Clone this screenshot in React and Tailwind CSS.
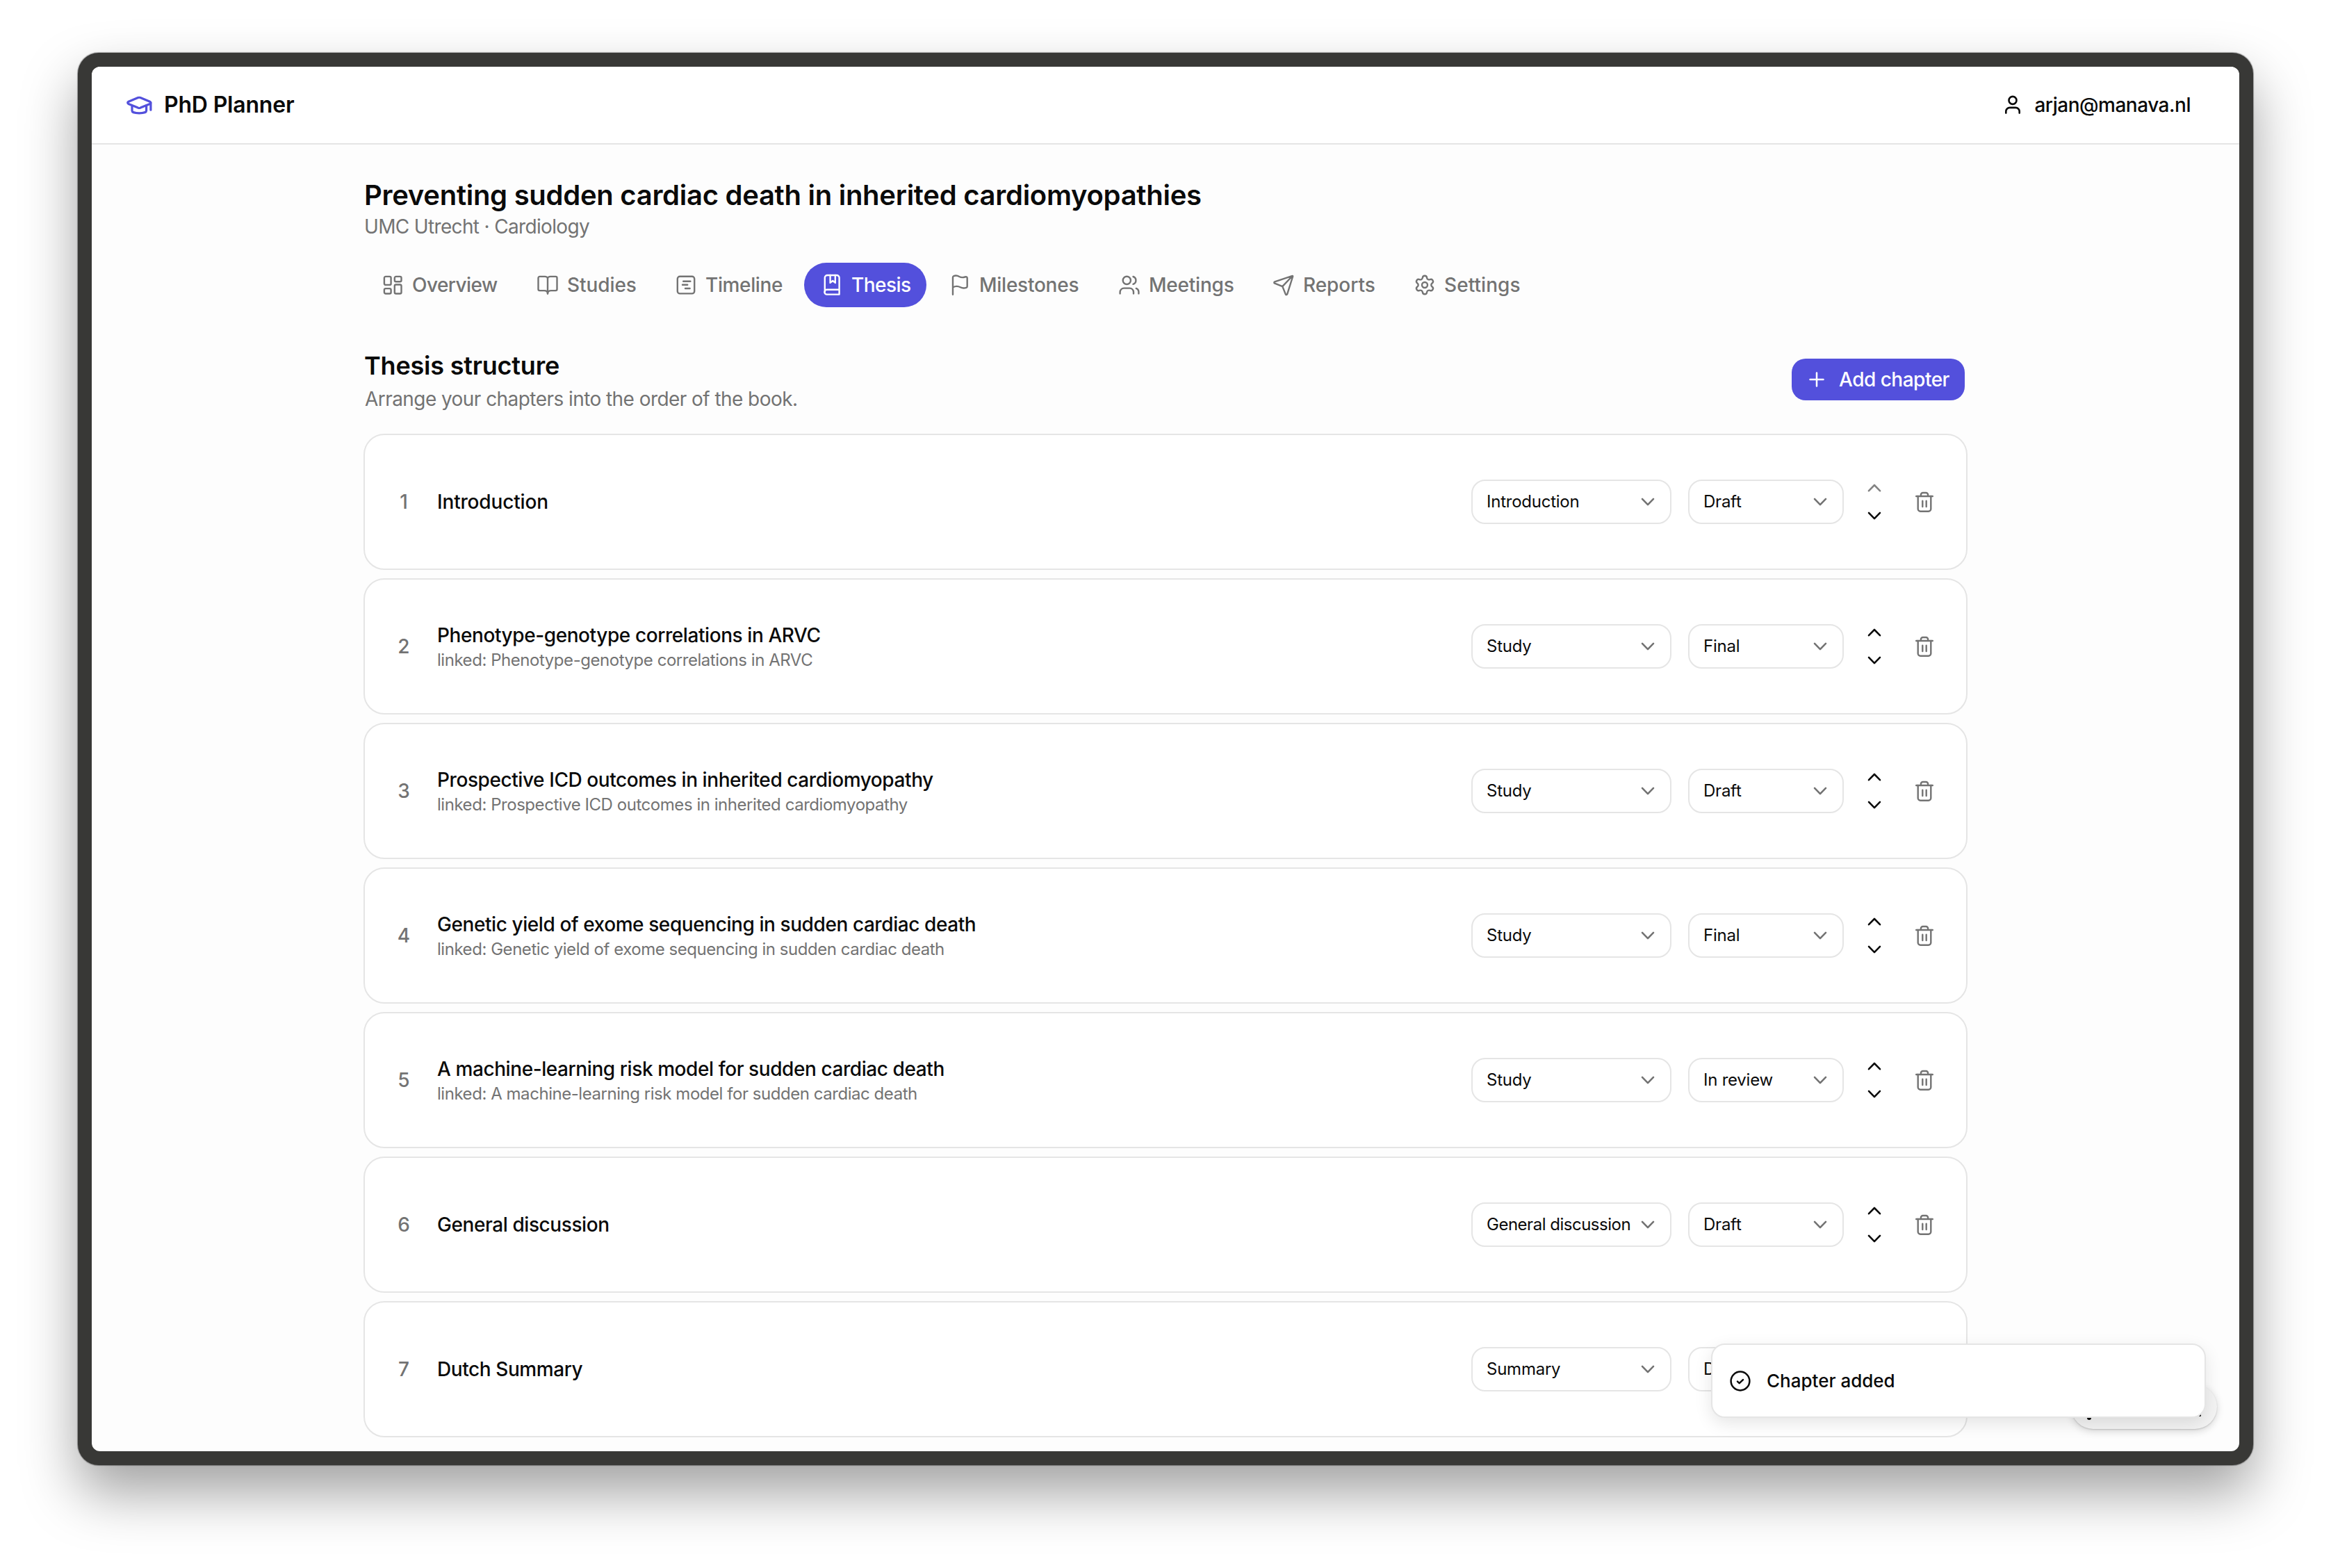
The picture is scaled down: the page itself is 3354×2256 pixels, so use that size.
import React from 'react';
import { Settings } from 'lucide-react';

function Icon({ className = 'size-8', stroke = 2.4, children, size = 32 }) {
  return (
    <svg
      className={`${className} shrink-0`}
      viewBox={`0 0 ${size} ${size}`}
      fill="none"
      stroke="currentColor"
      strokeWidth={stroke}
      strokeLinecap="round"
      strokeLinejoin="round"
    >
      {children}
    </svg>
  );
}

const GraduationCap = () => (
  <Icon className="size-10 text-[#5350dc]" size={40} stroke={3.2}>
    <path d="M18.6 9.6 4.9 15.2c-1.6.7-1.6 2.6 0 3.3l13.7 5.6c1.1.5 2.3.5 3.4 0l13.7-5.6c1.6-.7 1.6-2.6 0-3.3L22 9.6a4.4 4.4 0 0 0-3.4 0Z" />
    <path d="M10 20.8v7.4c0 2 4 3.6 10.3 3.6s10.3-1.6 10.3-3.6v-7.4M36.9 17v10.2" />
  </Icon>
);
const User = () => (
  <Icon stroke={2.6}>
    <circle cx="16" cy="9.4" r="5.5" />
    <path d="M6.3 27.6v-2.2a5.5 5.5 0 0 1 5.5-5.5h8.4a5.5 5.5 0 0 1 5.5 5.5v2.2" />
  </Icon>
);
const Grid = () => (
  <Icon>
    <rect x="3.9" y="3.9" width="9.7" height="12" rx="2" />
    <rect x="18.8" y="3.9" width="9.7" height="7.4" rx="2" />
    <rect x="3.9" y="21.1" width="9.7" height="7.4" rx="2" />
    <rect x="18.8" y="15.5" width="9.7" height="13" rx="2" />
  </Icon>
);
const Book = () => (
  <Icon>
    <path d="M16 28.4V7c0-1.8-1.8-3.1-4-3.1H4.5a2 2 0 0 0-2 2v16.2a2 2 0 0 0 2 2H11c3 0 5 1.5 5 4.3" />
    <path d="M16 7c0-1.8 1.8-3.1 4-3.1h7.5a2 2 0 0 1 2 2v16.2a2 2 0 0 1-2 2H21c-3 0-5 1.5-5 4.3" />
  </Icon>
);
const TimelineIcon = () => (
  <Icon>
    <rect x="3.8" y="3.8" width="24.4" height="24.6" rx="3.4" />
    <path d="M12.2 10.7h10.2M11 15.7h7.2M15 21h6.6" />
  </Icon>
);
const Bookmark = () => (
  <Icon>
    <path d="M26.6 22.7H8.8a3.4 3.4 0 0 0 0 6.9h17.8V5.6a3.6 3.6 0 0 0-3.6-3.6H9.4a3.6 3.6 0 0 0-3.6 3.6V26" />
    <path d="M13.6 2v10.9l3.6-3 3.6 3V2" />
  </Icon>
);
const Flag = () => (
  <Icon>
    <path d="M6 29.8V5c0-.9.5-1.6 1.3-1.9 2.8-1 5.3-.7 8 .9 2.7 1.5 5.3 1.5 8.2.5 1.4-.5 3.2-.1 3.200 1.600v11.800c0 .9-.5 1.600-1.300 1.900-3 1.100-5.800 1-8.600-.5-3.400-1.900-6.900-1.900-10.800 0" />
  </Icon>
);
const Users = () => (
  <Icon>
    <circle cx="12.3" cy="9.4" r="5.6" />
    <path d="M2.6 28.4v-2.2a5.6 5.6 0 0 1 5.6-5.6h8.2a5.6 5.6 0 0 1 5.6 5.6v2.2" />
    <path d="M21.5 4c2.4.8 3.9 3 3.9 5.4s-1.5 4.6-3.9 5.4M25.8 20.9c2.2.9 3.6 3 3.6 5.3v2.2" />
  </Icon>
);
const Plane = () => (
  <Icon>
    <path d="M28.6 2.9 3.2 11.3c-1.1.4-1.2 1.9-.1 2.4l11.2 4.4 4.5 11.3c.4 1.100 2 1 2.300-.1l8-25.300c.2-.7-.1-1.100-.5-1.100ZM28.600 3 14.300 18.100" />
  </Icon>
);
const Gear = () => <Settings className="size-8 shrink-0" strokeWidth={1.8} />;
const Plus = () => (
  <Icon stroke={2.5}>
    <path d="M16 6.5v19M6.5 16h19" />
  </Icon>
);
const Chevron = ({ up, className = '' }) => (
  <Icon className={`size-8 ${className}`} stroke={2.6}>
    {up ? <path d="M8 20.2 16 12l8 8.200" /> : <path d="M8 11.900l8 8.200 8-8.200" />}
  </Icon>
);
const Trash = () => (
  <Icon className="size-8 text-[#737373]">
    <path d="M4.2 8h23.6M10.9 8V5.8A2.8 2.8 0 0 1 13.7 3h4.6a2.8 2.8 0 0 1 2.8 2.800V8" />
    <path d="M6.700 8v18.200a3.500 3.500 0 0 0 3.500 3.500h11.600a3.500 3.500 0 0 0 3.500-3.500V8M13.300 14.700v8.400M18.700 14.700v8.400" />
  </Icon>
);
const CircleCheck = () => (
  <Icon stroke={2.5}>
    <circle cx="16" cy="16" r="13.4" />
    <path d="m12 16.6 2.700 2.500 5.300-5" />
  </Icon>
);

const tabs = [
  { icon: Grid, label: 'Overview', box: 'w-[215px]', track: 'tracking-[-0.0197em]' },
  { icon: Book, label: 'Studies', box: 'w-[191px]', track: 'tracking-[-0.003em]' },
  { icon: TimelineIcon, label: 'Timeline', box: 'w-[202px]', track: 'tracking-[-0.0133em]' },
  { icon: Bookmark, label: 'Thesis', box: 'w-[176px]', track: 'tracking-[-0.0193em]', active: true },
  { icon: Flag, label: 'Milestones', box: 'w-[236px]', track: 'tracking-[-0.009em]' },
  { icon: Users, label: 'Meetings', box: 'w-[214px]', track: 'tracking-[-0.008em]' },
  { icon: Plane, label: 'Reports', box: 'w-[195px]', track: 'tracking-[-0.002em]' },
  { icon: Gear, label: 'Settings', box: 'w-[202px]', track: 'tracking-[0.002em]' },
];

const chapters = [
  { title: 'Introduction', kind: 'Introduction', status: 'Draft' },
  { title: 'Phenotype-genotype correlations in ARVC', linked: true, kind: 'Study', status: 'Final' },
  { title: 'Prospective ICD outcomes in inherited cardiomyopathy', linked: true, kind: 'Study', status: 'Draft' },
  { title: 'Genetic yield of exome sequencing in sudden cardiac death', linked: true, kind: 'Study', status: 'Final' },
  { title: 'A machine-learning risk model for sudden cardiac death', linked: true, kind: 'Study', status: 'In review' },
  { title: 'General discussion', kind: 'General discussion', status: 'Draft' },
  { title: 'Dutch Summary', kind: 'Summary', status: 'Draft' },
];

function Select({ value, className }) {
  return (
    <div
      className={`flex h-16 shrink-0 items-center justify-between rounded-[20px] border-2 border-[#e5e5e5] bg-white pr-4 pl-5 text-[24px] whitespace-nowrap ${className}`}
    >
      <span className={value.length > 12 ? 'tracking-[-0.0205em]' : 'tracking-[-0.0100em]'}>{value}</span>
      <Chevron className="text-[#737373]" />
    </div>
  );
}

function ChapterCard({ index, chapter }) {
  return (
    <div className="flex h-[196px] items-center rounded-[30px] border-2 border-[#e5e5e5] bg-white pr-11 pl-10">
      <span className="w-8 shrink-0 text-center text-[28px] font-medium text-[#737373]">{index + 1}</span>
      <div className="ml-8 flex-1 whitespace-nowrap">
        <div
          className={`text-[28px]/[40px] font-medium ${
            chapter.title.length > 12 ? 'tracking-[-0.0150em]' : 'tracking-[-0.006em]'
          }`}
        >
          {chapter.title}
        </div>
        {chapter.linked && (
          <div className="text-[24px]/[32px] tracking-[-0.0190em] text-[#737373]">linked: {chapter.title}</div>
        )}
      </div>
      <Select value={chapter.kind} className="w-[288px]" />
      <Select value={chapter.status} className="ml-6 w-[224px]" />
      <div className="ml-7 flex flex-col gap-2">
        <Chevron up className={index === 0 ? 'opacity-50' : ''} />
        <Chevron />
      </div>
      <div className="ml-10">
        <Trash />
      </div>
    </div>
  );
}

export default function App() {
  return (
    <div className="h-[2256px] w-[3354px] overflow-hidden bg-white px-[112px] pt-[76px] font-['Inter',sans-serif] text-[#0a0a0a]">
      <div className="h-[2032px] w-[3130px] rounded-[30px] bg-[#383836] p-5 shadow-[0_40px_80px_rgba(0,0,0,0.37),0_0_1px_1px_rgba(90,90,90,0.5)]">
        <div className="relative h-[1992px] overflow-hidden rounded-[12px] bg-[#fdfdfd]">
          <header className="flex h-28 items-center justify-between border-b-2 border-[#e5e5e5] bg-white pr-[70px] pl-12">
            <div className="flex items-center gap-4">
              <GraduationCap />
              <span className="text-[32px] font-semibold tracking-[-0.006em]">PhD Planner</span>
            </div>
            <div className="flex items-center gap-[15px]">
              <User />
              <span className="text-[28px] font-medium tracking-[-0.0171em]">arjan@manava.nl</span>
            </div>
          </header>

          <main className="mx-auto w-[2308px] pt-12">
            <div className="px-[2px]">
              <h1 className="-ml-px text-[40px]/[50px] font-semibold tracking-[-0.007em]">
                Preventing sudden cardiac death in inherited cardiomyopathies
              </h1>
              <p className="-ml-px text-[28px]/[40px] tracking-[-0.0234em] text-[#737373]">UMC Utrecht · Cardiology</p>

              <nav className="mt-8 flex gap-2">
                {tabs.map(({ icon: TabIcon, label, box, track, active }) => (
                  <div
                    key={label}
                    className={`flex h-16 items-center gap-3 rounded-full pl-6 text-[28px] font-medium ${box} ${
                      active ? 'bg-[#5350dc] text-white' : 'text-[#737373]'
                    }`}
                  >
                    <TabIcon />
                    <span className={track}>{label}</span>
                  </div>
                ))}
              </nav>

              <div className="mt-14 flex h-24 items-center justify-between">
                <div>
                  <h2 className="-ml-px text-[36px]/[56px] font-semibold tracking-[-0.006em]">Thesis structure</h2>
                  <p className="text-[28px]/[40px] tracking-[-0.02em] text-[#737373]">
                    Arrange your chapters into the order of the book.
                  </p>
                </div>
                <button className="mr-[2px] flex h-[60px] w-[249px] items-center gap-4 rounded-[20px] bg-[#5350dc] pl-5 text-[28px] font-medium text-white">
                  <Plus />
                  <span className="whitespace-nowrap tracking-[-0.018em]">Add chapter</span>
                </button>
              </div>
            </div>

            <div className="mt-[30px] flex flex-col gap-3">
              {chapters.map((chapter, i) => (
                <ChapterCard key={chapter.title} index={i} chapter={chapter} />
              ))}
            </div>
          </main>

          <div className="absolute right-8 bottom-8 h-16 w-[210px] rounded-full bg-[#f3f3f3] shadow-[0_3px_12px_rgba(0,0,0,0.15),0_1px_2px_rgba(0,0,0,0.16)]">
            <div className="absolute bottom-[13px] left-[23px] h-3 w-[6px] rounded-full bg-[#0a0a0a]" />
            <div className="absolute right-[23px] bottom-[18px] h-3 w-[3px] rounded-full bg-[#0a0a0a]" />
          </div>

          <div className="absolute right-12 bottom-12 flex h-[107px] w-[712px] items-center gap-[22px] rounded-[20px] border-2 border-[#e5e5e5] bg-white pl-6 shadow-[0_8px_24px_rgba(0,0,0,0.1)]">
            <CircleCheck />
            <span className="text-[26px] font-medium">Chapter added</span>
          </div>
        </div>
      </div>
    </div>
  );
}
